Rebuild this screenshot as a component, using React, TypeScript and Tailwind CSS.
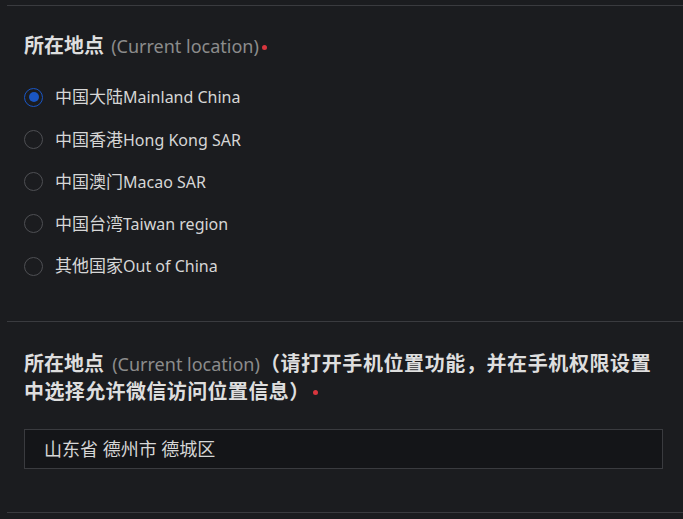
import { FC } from 'react';

const options = [
  { zh: '中国大陆', en: 'Mainland China', checked: true },
  { zh: '中国香港', en: 'Hong Kong SAR' },
  { zh: '中国澳门', en: 'Macao SAR' },
  { zh: '中国台湾', en: 'Taiwan region' },
  { zh: '其他国家', en: 'Out of China' },
];

const font = "font-['Noto_Sans','Noto_Sans_CJK_SC',sans-serif]";

const Star: FC = () => (
  <span className="inline-block w-[5px] h-[5px] rounded-full bg-[#d9363e] ml-[3px] align-middle mb-[3px]" />
);

const App: FC = () => {
  return (
    <div className={`min-h-[519px] w-full bg-[#1b1c1f] pt-[5px] ${font}`}>
      <section className="ml-[7px] border-t border-[#3a3b3f] pl-[17px] pr-5 pt-[26px] pb-[34px]">
        <h2 className="h-[28px] leading-[28px] text-[#dedede]">
          <span className="text-[20px] font-bold">所在地点</span>{' '}
          <span className="ml-[3px] text-[18px] text-[#8c8c8c]">(Current location)</span>
          <Star />
        </h2>
        <ul className="mt-4 flex flex-col">
          {options.map((o) => (
            <li key={o.en} className="flex h-[42.25px] items-center gap-3">
              {o.checked ? (
                <span className="flex h-[19px] w-[19px] items-center justify-center rounded-full border-[1.5px] border-[#1a56c4]">
                  <span className="h-[10px] w-[10px] rounded-full bg-[#1a56c4]" />
                </span>
              ) : (
                <span className="h-[19px] w-[19px] rounded-full border-[1.5px] border-[#4e4f53]" />
              )}
              <span className="text-[16px] text-[#d6d6d6]">
                <span className="text-[17px]">{o.zh}</span>
                {o.en}
              </span>
            </li>
          ))}
        </ul>
      </section>
      <section className="ml-[7px] border-t border-b border-[#3a3b3f] pl-[17px] pr-5 pt-[28px] pb-[43px]">
        <h2 className="text-[20px] font-bold leading-[28px] text-[#dedede]">
          <span className="block h-[28px] whitespace-nowrap">
            所在地点{' '}
            <span className="ml-[3px] text-[18px] font-normal text-[#8c8c8c]">(Current location)</span>
            <span className="tracking-[0.6px]">（请打开手机位置功能，并在手机权限设置</span>
          </span>
          <span className="block h-[28px] tracking-[0.4px]">
            中选择允许微信访问位置信息）
            <Star />
          </span>
        </h2>
        <div className="mt-[23px] flex h-10 items-center border border-[#3a3b3f] bg-[#141518] pl-[19px] text-[18px] text-[#d6d6d6]">
          山东省 德州市 德城区
        </div>
      </section>
    </div>
  );
};

export default App;
